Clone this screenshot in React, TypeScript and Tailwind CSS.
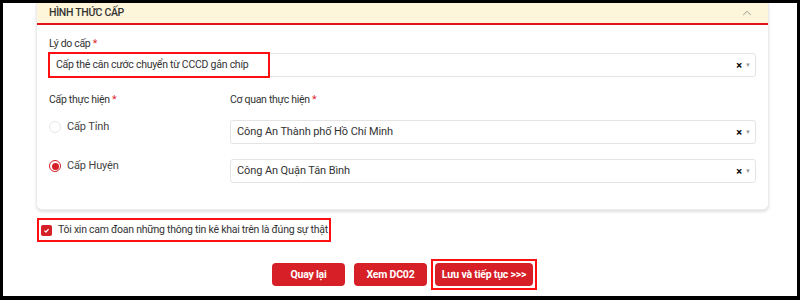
import { ChevronUp } from 'lucide-react';

const font = { fontFamily: 'Roboto, "Noto Sans", sans-serif' };

const SelectBox = ({ value, textClass = 'text-[11px] tracking-[-0.1px]' }: { value: string; textClass?: string }) => (
  <div className="flex h-6 items-center rounded-[3px] border border-[#e4e4e4] pl-[6px] pr-[4px]">
    <span className={`flex-1 text-[#333] ${textClass}`}>{value}</span>
    <span className="mr-[3px] text-[11px] font-bold leading-none text-black">×</span>
    <span className="text-[6px] leading-none text-[#999]">▼</span>
  </div>
);

const Radio = ({ label, checked }: { label: string; checked?: boolean }) => (
  <div className="flex h-6 items-start gap-[6px] pt-[1px]">
    {checked ? (
      <span className="flex h-3 w-3 items-center justify-center rounded-full border border-[#d71f27] bg-white">
        <span className="h-[7px] w-[7px] rounded-full bg-[#d71f27]" />
      </span>
    ) : (
      <span className="h-3 w-3 rounded-full border border-[#e6e6e6] bg-white" />
    )}
    <span className="-mt-[2px] text-[11px] tracking-[-0.15px] text-[#444]">{label}</span>
  </div>
);

const Label = ({ text }: { text: string }) => (
  <div className="h-4 text-[10.5px] leading-4 tracking-[-0.3px] text-[#333]">
    {text} <span className="text-[#e0262d]">*</span>
  </div>
);

const btn = 'h-[23px] rounded-[4px] bg-[#d71f27] text-[10.5px] font-bold tracking-[-0.2px] text-white';

export default function App() {
  return (
    <div className="h-[300px] w-[800px] overflow-hidden border-b-[4px] border-l-[3px] border-r-[3px] border-t-[3px] border-black bg-white" style={font}>
      <div className="ml-[33px] mr-[28px] rounded-b-md border border-t-0 border-[#ececec] bg-white shadow-[0_2px_3px_rgba(0,0,0,0.12)]">
        <div className="flex h-[22px] items-center justify-between border-b-2 border-[#e3131b] bg-[#fdf6da] pl-[12px] pr-[14px]">
          <span className="text-[10.5px] font-medium tracking-[-0.3px] text-[#333]">HÌNH THỨC CẤP</span>
          <ChevronUp className="h-[14px] w-[14px] text-[#888]" strokeWidth={1.5} />
        </div>

        <div className="px-[12px] pb-[26px] pt-[11px]">
          <Label text="Lý do cấp" />
          <div className="relative mt-[1px]">
            <SelectBox value="Cấp thẻ căn cước chuyển từ CCCD gắn chíp" textClass="text-[10.5px] tracking-[-0.25px]" />
            <div className="absolute left-[-1px] top-[-1px] h-[26px] w-[222px] border-2 border-[#ff1010]" />
          </div>

          <div className="mt-[15px] grid grid-cols-[181px_1fr]">
            <div>
              <Label text="Cấp thực hiện" />
              <div className="mt-[12px] flex flex-col gap-[15px]">
                <Radio label="Cấp Tỉnh" />
                <Radio label="Cấp Huyện" checked />
              </div>
            </div>
            <div>
              <Label text="Cơ quan thực hiện" />
              <div className="mt-[12px] flex flex-col gap-[15px]">
                <SelectBox value="Công An Thành phố Hồ Chí Minh" />
                <SelectBox value="Công An Quận Tân Bình" />
              </div>
            </div>
          </div>
        </div>
      </div>

      <div className="ml-[34px] mt-[8px] flex h-[24px] w-[294px] items-center gap-[6px] border-2 border-[#ff1010] pl-[2px]">
        <span className="flex h-[11px] w-[11px] items-center justify-center rounded-[2px] bg-[#d71f27]">
          <svg viewBox="0 0 10 10" className="h-[7px] w-[7px]" fill="none" stroke="white" strokeWidth="1.8">
            <path d="M2 5.2 L4.2 7.2 L8 3" />
          </svg>
        </span>
        <span className="whitespace-nowrap text-[10.5px] tracking-[-0.25px] text-[#333]">Tôi xin cam đoan những thông tin kê khai trên là đúng sự thật</span>
      </div>

      <div className="mt-[17px] flex items-center pl-[269px]">
        <button className={`${btn} w-[73px]`}>Quay lại</button>
        <button className={`${btn} ml-[9px] w-[73px]`}>Xem DC02</button>
        <div className="ml-[4px] border-2 border-[#ff1010] p-[2px]">
          <button className={`${btn} block w-[98px] whitespace-nowrap`}>Lưu và tiếp tục &gt;&gt;&gt;</button>
        </div>
      </div>
    </div>
  );
}
